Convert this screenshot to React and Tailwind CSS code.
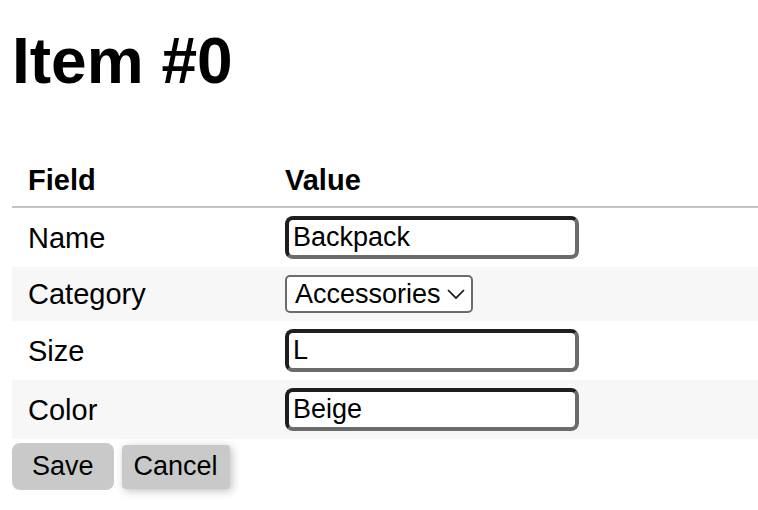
const fieldClass =
  'block h-[43px] w-[294px] rounded-lg border-4 border-t-[#1e1e20] border-l-[#1e1e20] border-r-[#6b6b6b] border-b-[#6b6b6b] bg-white px-1 text-[27px] leading-8 outline-none';

const cellClass = 'px-4 py-2 align-middle';
const headerClass = 'px-4 pt-[11px] pb-[9px] font-bold';

function TextRow({ id, label, value, shaded }) {
  return (
    <tr className={shaded ? 'bg-[#f7f7f7]' : 'bg-white'}>
      <td className={cellClass}>
        <label htmlFor={id}>{label}</label>
      </td>
      <td className={cellClass}>
        <input id={id} type="text" defaultValue={value} className={fieldClass} />
      </td>
    </tr>
  );
}

export default function App() {
  return (
    <main className="bg-white pt-6 pb-5 pl-3 font-['Liberation_Sans',Arial,sans-serif] text-[29px] leading-[34px] text-black">
      <h1 className="mb-[54px] text-[64px] leading-[74px] font-bold">Item #0</h1>
      <form onSubmit={(event) => event.preventDefault()}>
        <table className="w-full table-fixed border-collapse text-left">
          <colgroup>
            <col className="w-[257px]" />
            <col />
          </colgroup>
          <thead>
            <tr className="border-b-2 border-[#c4c4c4]">
              <th scope="col" className={headerClass}>Field</th>
              <th scope="col" className={headerClass}>Value</th>
            </tr>
          </thead>
          <tbody>
            <TextRow id="name" label="Name" value="Backpack" />
            <tr className="bg-[#f7f7f7]">
              <td className={cellClass}>
                <label htmlFor="category">Category</label>
              </td>
              <td className={cellClass}>
                <div className="relative w-[188px]">
                  <select
                    id="category"
                    defaultValue="Accessories"
                    className="block h-[38px] w-full appearance-none rounded-[5px] border-2 border-[#6b6b6b] bg-white pl-2 text-[27px] leading-8 outline-none"
                  >
                    <option>Accessories</option>
                    <option>Clothing</option>
                    <option>Shoes</option>
                  </select>
                  <svg
                    aria-hidden="true"
                    viewBox="0 0 18 12"
                    className="pointer-events-none absolute top-3.5 right-2 h-3 w-[18px]"
                    fill="none"
                    stroke="#111"
                    strokeWidth="1.7"
                  >
                    <path d="M1 1L9 9L17 1" />
                  </svg>
                </div>
              </td>
            </tr>
            <TextRow id="size" label="Size" value="L" />
            <TextRow id="color" label="Color" value="Beige" shaded />
          </tbody>
        </table>
        <div className="flex items-center gap-2 pt-1 text-[27px]">
          <button type="submit" className="h-[47px] rounded-lg bg-[#c9c9c9] px-5 pb-0.5">
            Save
          </button>
          <button
            type="button"
            className="h-11 rounded-[4px] bg-[#c9c9c9] px-3 pb-0.5 shadow-[2px_2px_8px_rgba(0,0,0,0.25)]"
          >
            Cancel
          </button>
        </div>
      </form>
    </main>
  );
}
